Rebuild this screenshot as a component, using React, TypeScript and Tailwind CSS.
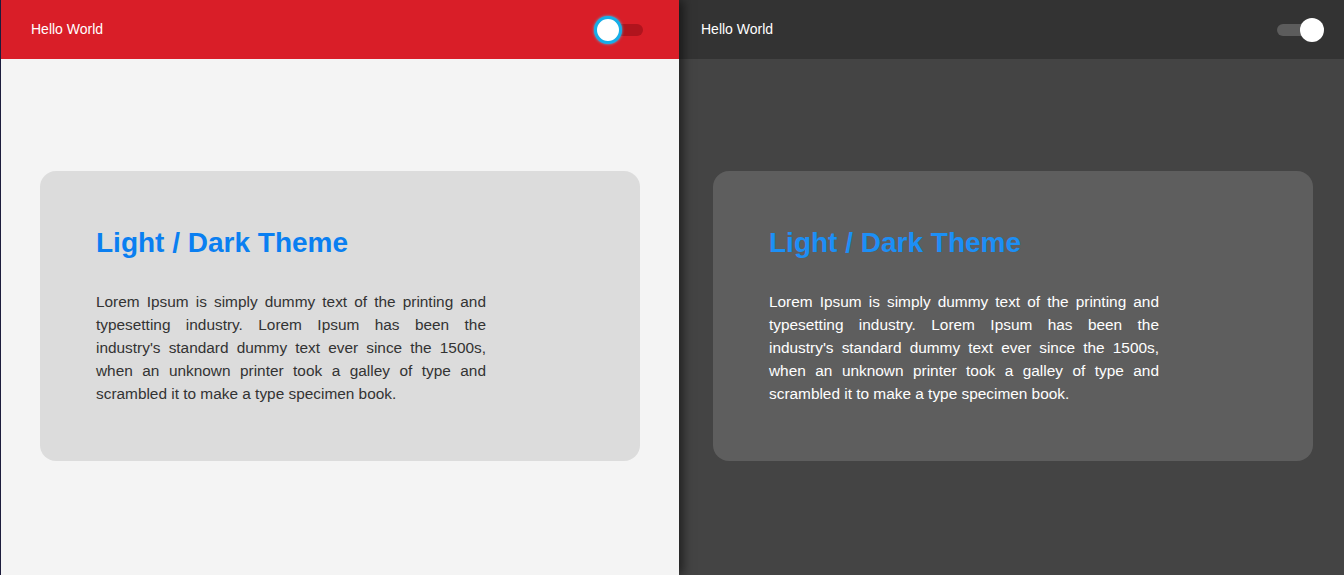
import React from 'react';

const lorem =
  "Lorem Ipsum is simply dummy text of the printing and typesetting industry. Lorem Ipsum has been the industry's standard dummy text ever since the 1500s, when an unknown printer took a galley of type and scrambled it to make a type specimen book.";

// one half of the demo: light or dark
function Panel({ dark }: { dark: boolean }) {
  return (
    <div
      className={`flex flex-col h-full ${
        dark ? 'flex-1 bg-[#444444]' : 'w-[679px] bg-[#f4f4f4] border-l border-[#1c1c3c] relative z-10 shadow-[4px_0_10px_rgba(0,0,0,0.55)]'
      }`}
    >
      <div
        className={`h-[59px] flex items-center justify-between shrink-0 ${
          dark ? 'bg-[#333333] pl-[22px] pr-[20px]' : 'bg-[#d91e28] pl-[30px] pr-[36px]'
        }`}
      >
        <span className="text-[14px] text-white">Hello World</span>
        {dark ? (
          <div className="relative w-[47px] h-[24px] flex items-center">
            <div className="w-[36px] h-[12px] rounded-full bg-[#5c5c5c]" />
            <div className="absolute right-0 top-0 w-[24px] h-[24px] rounded-full bg-white" />
          </div>
        ) : (
          <div className="relative w-[49px] h-[28px] flex items-center justify-end">
            <div className="w-[36px] h-[12px] rounded-full bg-[#b0141d]" />
            <div className="absolute left-0 top-0 w-[28px] h-[28px] rounded-full bg-white border-[3px] border-[#16aee8] shadow-[0_0_3px_#3fc4f4]" />
          </div>
        )}
      </div>
      <div className={`flex-1 pt-[112px] ${dark ? 'pl-[34px]' : 'pl-[39px]'}`}>
        <div
          className={`w-[600px] h-[290px] rounded-[16px] px-[56px] pt-[56px] ${
            dark ? 'bg-[#5e5e5e]' : 'bg-[#dcdcdc]'
          }`}
        >
          <h2
            className={`text-[28px] font-bold leading-[31px] mb-[32px] ${
              dark ? 'text-[#1c8ff6]' : 'text-[#0a7ff1]'
            }`}
          >
            Light / Dark Theme
          </h2>
          <p
            className={`w-[390px] text-[15.4px] leading-[23px] text-justify ${
              dark ? 'text-white' : 'text-[#333333]'
            }`}
          >
            {lorem}
          </p>
        </div>
      </div>
    </div>
  );
}

export default function App() {
  return (
    <div className="flex w-[1344px] h-[575px] overflow-hidden font-['Liberation_Sans',Arial,sans-serif]">
      <Panel dark={false} />
      <Panel dark={true} />
    </div>
  );
}
